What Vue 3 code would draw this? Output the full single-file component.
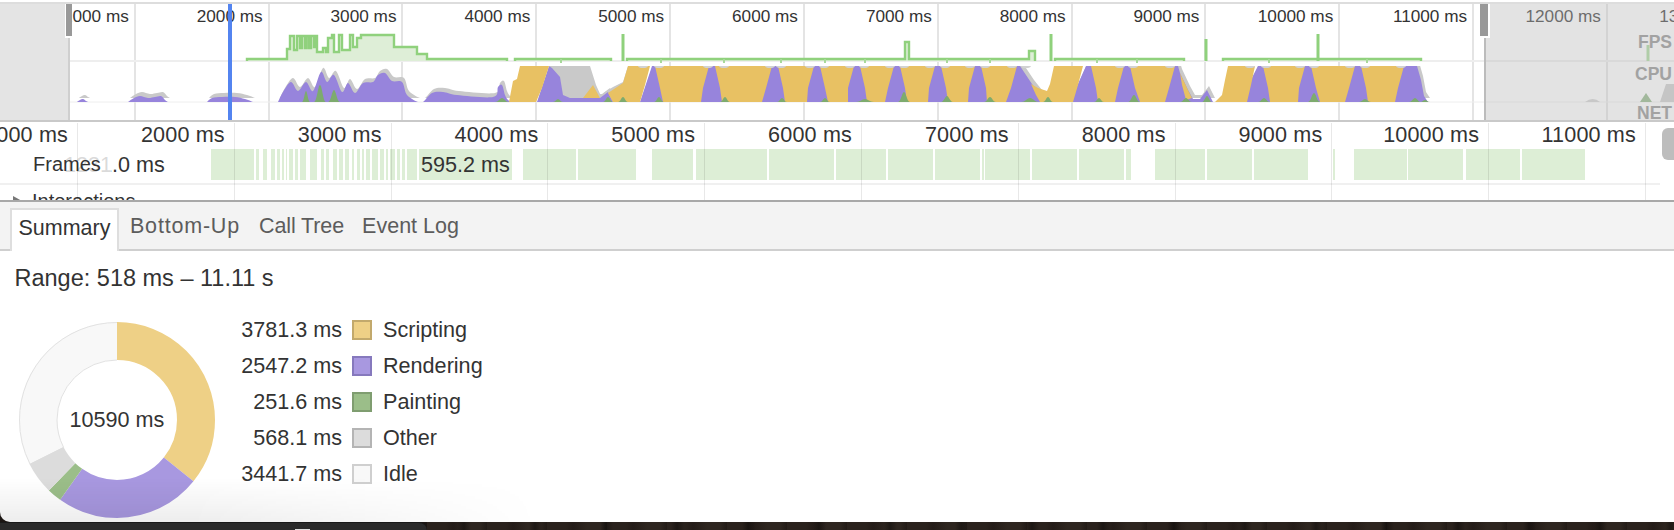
<template>
  <div class="page">
    <div class="window">
      <section class="overview">
        <div class="overview__ruler">
          <div v-for="t in overviewTicks" :key="t" class="overview__cell">{{ t }} ms</div>
        </div>
        <svg class="overview__chart" width="1674" height="120" viewBox="0 0 1674 120">
          <defs>
            <clipPath id="band"><rect x="0" y="66" width="1674" height="36" /></clipPath>
          </defs>
          <line x1="0" y1="61" x2="1674" y2="61" stroke="#eeeeee" stroke-width="2" />
          <line x1="0" y1="102" x2="1674" y2="102" stroke="#eeeeee" />
          <path v-for="(d, i) in fpsPaths" :key="'fps' + i" :d="d" fill="#deeed7" stroke="#90d17d" stroke-width="2.4" />
          <line v-for="x in fpsTicks" :key="'tick' + x" :x1="x" y1="59" :x2="x" y2="63" stroke="#a8d99a" stroke-width="2" />
          <line v-for="s in fpsSpikes" :key="'spike' + s[0]" :x1="s[0]" :y1="s[1]" :x2="s[0]" y2="61" stroke="#8fd17c" stroke-width="3" />
          <g clip-path="url(#band)">
            <path v-for="(d, i) in purplePaths" :key="'halo' + i" :d="d" fill="#c9c9c9" transform="translate(2 -4)" />
            <path :d="greyBlock" fill="#c9c9c9" />
            <path v-for="(d, i) in purplePaths" :key="'cpu' + i" :d="d" fill="#9784dc" />
            <path v-for="(d, i) in yellowPaths" :key="'script' + i" :d="d" fill="#e8c163" />
            <ellipse v-for="x in topCaps" :key="'cap' + x" :cx="x" cy="65.5" rx="5" ry="2.6" fill="#d2d2d2" />
            <path v-for="(d, i) in greenPaths" :key="'paint' + i" :d="d" fill="#7dab6e" />
          </g>
          <path d="M1585 102 Q1593 96 1600 102 Z" fill="#d0d0d0" />
          <path d="M1640 102 L1646 93 L1652 102 Z" fill="#8fb586" />
          <path d="M1660 102 L1666 84 L1674 84 L1674 102 Z" fill="#cccccc" />
          <line x1="1648" y1="45" x2="1648" y2="61" stroke="#a8d99a" stroke-width="3" />
        </svg>
        <div class="overview__dim overview__dim--left"></div>
        <div class="overview__dim overview__dim--right"></div>
        <div class="overview__handle overview__handle--left"></div>
        <div class="overview__handle overview__handle--right"></div>
        <span class="overview__tag overview__tag--fps">FPS</span>
        <span class="overview__tag overview__tag--cpu">CPU</span>
        <span class="overview__tag overview__tag--net">NET</span>
        <div class="overview__cursor"></div>
      </section>

      <section class="main">
        <div class="main__rows">
          <div class="frames">
            <div
              v-for="f in frames"
              :key="f[0]"
              class="frames__block"
              :style="{ left: f[0] + 'px', width: f[1] - f[0] + 'px' }"
            >{{ f[2] }}</div>
            <span class="frames__ghost">1231.0 ms</span>
            <span class="frames__label">Frames</span>
          </div>
          <div class="interactions"><i class="interactions__arrow"></i>Interactions</div>
        </div>
        <div class="main__ruler">
          <div v-for="t in mainTicks" :key="t" class="main__cell">{{ t }} ms</div>
        </div>
        <div class="main__scroll"></div>
      </section>

      <nav class="tabs">
        <span v-for="tab in tabs" :key="tab.key" class="tabs__item" :class="tab.key">{{ tab.label }}</span>
      </nav>

      <section class="summary">
        <div class="summary__range">Range: 518 ms – 11.11 s</div>
        <div class="summary__body">
          <div class="donut">
            <svg width="196" height="196" viewBox="0 0 196 196">
              <circle
                v-for="s in slices"
                :key="s.label"
                cx="98"
                cy="98"
                r="79"
                fill="none"
                :stroke="s.fill"
                stroke-width="38"
                :stroke-dasharray="s.dash"
                :stroke-dashoffset="s.offset"
                transform="rotate(-90 98 98)"
              />
              <circle
                v-for="r in [97.5, 60]"
                :key="r"
                cx="98"
                cy="98"
                :r="r"
                fill="none"
                stroke="#e2e2e2"
                pathLength="100"
                stroke-dasharray="32.5 67.5"
                stroke-dashoffset="-67.5"
                transform="rotate(-90 98 98)"
              />
            </svg>
            <span class="donut__total">10590 ms</span>
          </div>
          <div class="legend">
            <template v-for="s in slices" :key="s.label">
              <span class="legend__value">{{ s.value }} ms</span>
              <i class="legend__swatch" :style="{ background: s.fill, borderColor: s.border }"></i>
              <span class="legend__label">{{ s.label }}</span>
            </template>
          </div>
        </div>
      </section>
      <div class="window__shade"></div>
    </div>
    <div class="desk">
      <div class="desk__dock"><i class="desk__chip"></i></div>
      <div class="desk__photo"></div>
    </div>
  </div>
</template>

<script setup>
const overviewTicks = [1000, 2000, 3000, 4000, 5000, 6000, 7000, 8000, 9000, 10000, 11000, 12000, 13000]
const mainTicks = [1000, 2000, 3000, 4000, 5000, 6000, 7000, 8000, 9000, 10000, 11000, 12000]
const tabs = [
  { key: 'tab-summary', label: 'Summary' },
  { key: 'tab-bottom', label: 'Bottom-Up' },
  { key: 'tab-tree', label: 'Call Tree' },
  { key: 'tab-log', label: 'Event Log' },
]

const frames = [
  [211, 254], [255.7, 259], [263, 267], [271, 275], [277, 280], [282, 284], [285.5, 287], [289, 293],
  [295, 298], [300, 306], [310, 317], [321, 324], [326, 329], [333, 337], [339, 343], [344.5, 349],
  [352, 354], [357, 360], [361.5, 364], [366, 370], [372, 378], [380, 384], [385.7, 388], [390, 395],
  [397, 400], [402, 405], [407, 417], [419, 512, '595.2 ms'], [522.7, 576], [578, 636], [652, 693],
  [696, 767], [769, 834], [836, 886], [888, 933], [935, 980], [982, 983.5], [985, 1030], [1032, 1077],
  [1079, 1124], [1126, 1131], [1155, 1205], [1207, 1252], [1254, 1308], [1333, 1334.5], [1354, 1406.5],
  [1408, 1462.5], [1466, 1520], [1522, 1585],
]

// step line: each pair is "run to x, then jump to y"
function stepPath(start, steps) {
  let d = `M${start} 61 V59`
  for (const [x, y] of steps) d += ` H${x} V${y}`
  return d
}

const fpsPaths = [
  stepPath(247, [
    [287, 49], [290, 36], [294, 50], [297, 36], [300, 48], [302, 36], [305, 48], [306.5, 36], [309, 48],
    [311, 36], [314, 47], [316, 36], [317, 52], [323, 48], [326, 52], [328, 38], [332, 35], [334, 52],
    [339, 35], [342, 50], [350, 35], [353, 47], [357, 38], [361, 35], [394, 47], [417, 54], [427, 59], [507, 61],
  ]),
  stepPath(515, [[611, 61]]),
  stepPath(627, [[905, 42], [909, 59], [1029, 51], [1035, 61]]),
  stepPath(1055, [[1184, 61]]),
  stepPath(1223, [[1421, 61]]),
]
const fpsTicks = [561, 661, 724, 781, 825, 865, 947, 990, 1097, 1137, 1269, 1367]
const fpsSpikes = [[623, 34], [1051, 34], [1206, 39], [1318, 34]]

const poly = (pts) => 'M' + pts.map((p) => p.join(' ')).join(' L') + ' Z'

// rounded hills that still pass through every point
function smooth(pts) {
  let d = `M${pts[0][0]} ${pts[0][1]}`
  for (let i = 0; i < pts.length - 1; i++) {
    const p0 = pts[i - 1] || pts[i]
    const p1 = pts[i]
    const p2 = pts[i + 1]
    const p3 = pts[i + 2] || p2
    const c1 = [p1[0] + (p2[0] - p0[0]) / 6, Math.min(102, p1[1] + (p2[1] - p0[1]) / 6)]
    const c2 = [p2[0] - (p3[0] - p1[0]) / 6, Math.min(102, p2[1] - (p3[1] - p1[1]) / 6)]
    d += ` C${c1[0]} ${c1[1]} ${c2[0]} ${c2[1]} ${p2[0]} ${p2[1]}`
  }
  return d + ' Z'
}

const purplePaths = [
  smooth([[77, 102], [80, 100], [83, 99], [86, 101], [88, 102]]),
  smooth([[128, 102], [134, 98], [140, 96], [148, 98], [155, 97], [161, 96], [165, 100], [168, 102]]),
  smooth([[207, 102], [212, 98], [222, 97], [235, 97], [245, 99], [253, 102]]),
  smooth([
    [278, 102], [283, 92], [291, 82], [298, 91], [306, 82], [313, 91], [321, 72], [327, 82], [334, 75],
    [342, 92], [348, 83], [355, 93], [363, 83], [373, 82], [378, 75], [385, 73], [392, 81], [402, 82],
    [407, 95], [418, 102], [423, 102], [432, 93], [443, 92], [457, 95], [493, 97], [498, 87], [502, 85],
    [505, 95], [508, 100], [512, 102],
  ]),
  poly([
    [537, 102], [549, 66], [552, 68], [560, 77], [563, 95], [570, 98], [600, 98], [608, 92], [613, 102],
    [640, 102], [652, 66], [1020, 66], [1032, 84], [1040, 94], [1043, 102],
  ]),
  poly([[1070, 102], [1086, 66], [1178, 66], [1180, 73], [1188, 90], [1193, 99], [1200, 99], [1207, 90], [1213, 102]]),
  poly([[1240, 102], [1258, 66], [1417, 66], [1421, 80], [1424, 96], [1428, 102]]),
]

const greyBlock = poly([
  [553, 66], [590, 66], [596, 85], [601, 96], [605, 92], [613, 87], [623, 82], [628, 66], [628, 102], [560, 102],
])

// one scripting block between two rendering peaks
function block(a, b, c, d) {
  return [[a + 3, 66], [a + 8, 88], [c, 102], [d, 102], [b - 9, 88], [b - 3, 66]]
}

const yellowPaths = [
  [[509, 102], [513, 81], [517, 79], [520, 66], [549, 66], [542, 88], [536, 102]],
  [[593, 85], [600, 98], [583, 98]],
  [[608, 93], [623, 83], [628, 66], [650, 66], [645, 85], [640, 102], [613, 102]],
  block(652, 712, 663, 701),
  block(712, 775, 722, 762),
  block(775, 817, 785, 807),
  block(817, 857, 828, 848),
  block(857, 897, 867, 885),
  block(897, 938, 907, 928),
  block(938, 978, 948, 968),
  block(978, 1020, 987, 1006),
  [[1031, 84], [1038, 88], [1047, 91], [1050, 84], [1054, 66], [1083, 66], [1078, 85], [1073, 102], [1040, 102], [1036, 95]],
  block(1088, 1127, 1098, 1115),
  block(1127, 1178, 1140, 1165),
  [[1180, 73], [1188, 90], [1192, 98], [1186, 100], [1182, 85]],
  [[1215, 102], [1222, 95], [1225, 80], [1228, 66], [1255, 66], [1251, 85], [1247, 102]],
  block(1260, 1308, 1270, 1298),
  block(1308, 1358, 1320, 1345),
  block(1358, 1407, 1368, 1395),
].map(poly)

const topCaps = [
  643, 659, 708, 724, 770, 781, 810, 824, 850, 864, 890, 904, 930, 945, 970, 985, 1012, 1026,
  1120, 1133, 1170, 1250, 1266, 1300, 1314, 1350, 1365, 1401,
]

const greenPaths = [
  [306, 4, 11], [320, 6, 17], [334, 6, 12], [502, 7, 4], [558, 5, 3], [608, 5, 5], [623, 5, 5],
  [659, 5, 5], [725, 5, 5], [782, 5, 4], [825, 5, 4], [865, 9, 3], [904, 6, 10], [947, 6, 6], [990, 6, 5],
  [1030, 9, 4], [1048, 5, 5], [1099, 5, 4], [1134, 6, 7], [1186, 6, 4], [1207, 5, 6], [1264, 6, 4],
  [1314, 6, 9], [1365, 6, 3], [1415, 6, 4], [1425, 5, 2],
].map(([x, w, h]) => {
  const top = 102 - h
  return `M${x - w} 102 C${x - w / 2} 102 ${x - w / 3} ${top} ${x} ${top} C${x + w / 3} ${top} ${x + w / 2} 102 ${x + w} 102 Z`
})

const TOTAL = 10590
const CIRC = 2 * Math.PI * 79
let used = 0
const slices = [
  { label: 'Scripting', ms: 3781.3, fill: '#eed086', border: '#c2a96c' },
  { label: 'Rendering', ms: 2547.2, fill: '#a898e0', border: '#8679bd' },
  { label: 'Painting', ms: 251.6, fill: '#9bbe89', border: '#7f9d70' },
  { label: 'Other', ms: 568.1, fill: '#dcdcdc', border: '#b4b4b4' },
  { label: 'Idle', ms: 3441.7, fill: '#f8f8f8', border: '#cfcfcf' },
].map((s) => {
  const len = (s.ms / TOTAL) * CIRC
  const slice = { ...s, value: s.ms.toFixed(1), dash: `${len} ${CIRC - len}`, offset: -used }
  used += len
  return slice
})
</script>

<style scoped>
.page {
  width: 1674px;
  height: 530px;
  overflow: hidden;
  display: flex;
  flex-direction: column;
  background: #1b1512;
  font-family: "Liberation Sans", Arial, sans-serif;
  color: #333;
}

.window {
  position: relative;
  flex: 0 0 522px;
  overflow: hidden;
  background: #fff;
  border-bottom-left-radius: 10px;
}

.window__shade {
  position: absolute;
  left: 0;
  bottom: 0;
  width: 540px;
  height: 44px;
  background: linear-gradient(to top, rgba(0, 0, 0, 0.07), rgba(0, 0, 0, 0));
  -webkit-mask-image: linear-gradient(to right, #000 35%, transparent);
  mask-image: linear-gradient(to right, #000 35%, transparent);
  pointer-events: none;
}

/* overview strip */
.overview {
  position: relative;
  height: 122px;
  box-sizing: border-box;
  overflow: hidden;
  border-bottom: 2px solid #c9c9c9;
}

.overview::before {
  content: "";
  position: absolute;
  left: 0;
  right: 0;
  top: 2px;
  height: 2px;
  background: #dddddd;
}

.overview__ruler {
  position: absolute;
  left: 2px;
  top: 4px;
  bottom: 0;
  display: flex;
}

.overview__cell {
  flex: 0 0 133.83px;
  box-sizing: border-box;
  padding: 2px 5px 0 0;
  border-right: 2px solid #e4e4e4;
  font-size: 17.2px;
  line-height: 20px;
  text-align: right;
  white-space: nowrap;
}

.overview__chart {
  position: absolute;
  left: 0;
  top: 0;
  filter: blur(0.4px);
}

.overview__dim {
  position: absolute;
  top: 4px;
  bottom: 0;
}

.overview__dim--left {
  left: 0;
  width: 68px;
  background: #e4e4e4;
  border-right: 2px solid #cfcfcf;
}

.overview__dim--right {
  left: 1484px;
  right: 0;
  background: rgba(188, 188, 188, 0.42);
  border-left: 2px solid #bcbcbc;
}

.overview__handle {
  position: absolute;
  top: 4px;
  width: 6px;
  height: 32px;
  background: #999;
  border-bottom: 2px solid #fff;
}

.overview__handle--left {
  left: 65px;
  border-left: 1px solid #fff;
}

.overview__handle--right {
  left: 1480px;
  width: 8px;
  border-right: 2px solid #fff;
}

.overview__tag {
  position: absolute;
  right: 2px;
  font-size: 17.5px;
  font-weight: 700;
  line-height: 20px;
  color: #a2a2a2;
}

.overview__tag--fps { top: 32px; }
.overview__tag--cpu { top: 64px; }
.overview__tag--net { top: 103px; }

.overview__cursor {
  position: absolute;
  left: 228px;
  top: 4px;
  bottom: 0;
  width: 4px;
  background: #5384f0;
}

/* flame chart head */
.main {
  position: relative;
  height: 78px;
  overflow: hidden;
  border-bottom: 2px solid #a8a8a8;
}

.main__ruler {
  position: absolute;
  left: -78.8px;
  top: 1px;
  bottom: 0;
  display: flex;
  pointer-events: none;
}

.main__cell {
  flex: 0 0 156.8px;
  box-sizing: border-box;
  padding-right: 9px;
  border-right: 1.5px solid rgba(0, 0, 0, 0.09);
  font-size: 21.6px;
  letter-spacing: 0.15px;
  line-height: 24px;
  text-align: right;
  white-space: nowrap;
}

.main__rows {
  padding-top: 27px;
}

.frames {
  position: relative;
  height: 31px;
  margin-bottom: 3px;
}

.frames__block {
  position: absolute;
  top: 0;
  bottom: 0;
  background: #ddeed6;
  font-size: 21.6px;
  line-height: 31px;
  text-align: center;
  white-space: nowrap;
}

.frames__ghost {
  position: absolute;
  left: 64px;
  top: 0;
  font-size: 21.6px;
  line-height: 31px;
  white-space: nowrap;
}

.frames__label {
  position: absolute;
  left: 0;
  top: 0;
  width: 111px;
  padding-left: 33px;
  box-sizing: border-box;
  background: rgba(255, 255, 255, 0.82);
  font-size: 20px;
  line-height: 31px;
}

.interactions {
  display: flex;
  align-items: center;
  width: 1660px;
  box-sizing: border-box;
  padding: 3px 0 0 13px;
  border-top: 2px solid #f0f0f0;
  font-size: 20px;
  line-height: 26px;
}

.interactions__arrow {
  width: 0;
  height: 0;
  margin-right: 10px;
  border-left: 9px solid #777;
  border-top: 5px solid transparent;
  border-bottom: 5px solid transparent;
}

.main__scroll {
  position: absolute;
  left: 1662px;
  top: 6px;
  width: 20px;
  height: 32px;
  border-radius: 6px;
  background: #bdbdbd;
}

/* tabs */
.tabs {
  display: flex;
  align-items: flex-end;
  height: 49px;
  box-sizing: border-box;
  padding-left: 10px;
  border-bottom: 2px solid #cfcfcf;
  background: #f3f3f3;
}

.tabs__item {
  height: 41px;
  padding: 0 9.5px;
  font-size: 21.5px;
  line-height: 36px;
  color: #5c5c5c;
}

.tab-bottom {
  padding-left: 11px;
  letter-spacing: 0.8px;
}

.tab-tree {
  padding-right: 8.5px;
  letter-spacing: -0.1px;
}

.tab-summary {
  box-sizing: border-box;
  padding: 0 6.5px;
  border: 2px solid #dedede;
  border-bottom: 0;
  background: #fff;
  color: #333;
  margin-bottom: -2px;
  height: 43px;
}

/* summary pane */
.summary__range {
  padding: 13.5px 0 0 14.5px;
  font-size: 23.5px;
  line-height: 26px;
}

.summary__body {
  display: flex;
  align-items: flex-start;
  padding: 31px 0 0 19px;
}

.donut {
  position: relative;
  width: 196px;
  height: 196px;
}

.donut svg {
  display: block;
}

.donut__total {
  position: absolute;
  left: 0;
  right: 0;
  top: 85px;
  font-size: 21.6px;
  line-height: 26px;
  text-align: center;
}

.legend {
  display: grid;
  grid-template-columns: 110px 20px auto;
  grid-auto-rows: 36px;
  column-gap: 10px;
  align-items: center;
  margin: -10px 0 0 17px;
  font-size: 21.6px;
}

.legend__value {
  text-align: right;
  white-space: nowrap;
}

.legend__swatch {
  box-sizing: border-box;
  width: 20px;
  height: 20px;
  border: 2px solid;
}

.legend__label {
  padding-left: 1px;
}

/* what shows under the window */
.desk {
  flex: 1;
  display: flex;
}

.desk__dock {
  position: relative;
  flex: 0 0 427px;
  border-top: 1px solid #191919;
  border-top-right-radius: 8px;
  background: #2a2a2a;
}

.desk__chip {
  position: absolute;
  left: 295px;
  top: 6px;
  width: 15px;
  height: 3px;
  background: #ddd;
}

.desk__photo {
  flex: 1;
  background:
    repeating-linear-gradient(90deg, rgba(0, 0, 0, 0) 0 31px, rgba(0, 0, 0, 0.35) 37px, rgba(0, 0, 0, 0) 44px 71px),
    repeating-linear-gradient(90deg, #2a221d 0 19px, #241c18 26px, #2e2620 40px 53px, #221b17 60px);
}
</style>

<style>
html,
body {
  margin: 0;
  background: #1b1512;
}
</style>
